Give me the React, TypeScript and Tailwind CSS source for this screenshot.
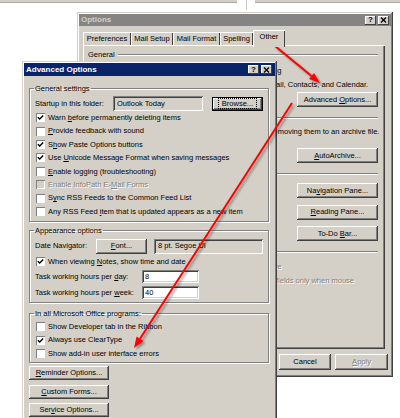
import React from 'react';

const raised = 'shadow-[inset_-1px_-1px_#404040,inset_1px_1px_#ffffff,inset_-2px_-2px_#808080]';
const frame = 'shadow-[inset_-1px_-1px_#404040,inset_1px_1px_#d4d0c8,inset_-2px_-2px_#808080,inset_2px_2px_#ffffff]';
const sunken = 'shadow-[inset_1px_1px_#808080,inset_-1px_-1px_#ffffff,inset_2px_2px_#404040,inset_-2px_-2px_#d4d0c8]';
const dim = 'text-[#808080] [text-shadow:1px_1px_0_#ffffff]';

type Kids = { children?: React.ReactNode; className?: string };

const Btn = ({ children, className = '', focused = false, disabled = false }: Kids & { focused?: boolean; disabled?: boolean }) => (
  <button
    type="button"
    className={`flex items-center justify-center bg-[#d4d0c8] whitespace-nowrap leading-none ${raised} ${focused ? 'border border-black' : ''} ${disabled ? dim : ''} ${className}`}
  >
    {focused ? (
      <span className="px-[3px] border border-dotted border-black leading-[9px]">{children}</span>
    ) : (
      <span>{children}</span>
    )}
  </button>
);

const Check = ({ checked = false, disabled = false }) => (
  <span
    className={`w-[9px] h-[9px] shrink-0 flex items-center justify-center ${disabled ? 'bg-[#d4d0c8]' : 'bg-white'} shadow-[inset_1px_1px_#808080,inset_-1px_-1px_#ffffff]`}
  >
    {checked && (
      <svg width="7" height="7" viewBox="0 0 7 7">
        <path d="M0.8 3.2 L2.7 5.1 L6.2 1.4" fill="none" stroke="#000" strokeWidth="1.4" />
      </svg>
    )}
  </span>
);

const CheckRow = ({ checked = false, disabled = false, children, className = '' }: Kids & { checked?: boolean; disabled?: boolean }) => (
  <div className={`flex items-center gap-[3px] h-[13.4px] ${disabled ? dim : ''} ${className}`}>
    <Check checked={checked} disabled={disabled} />
    <span className="whitespace-nowrap">{children}</span>
  </div>
);

const Group = ({ title, children, className = '' }: Kids & { title: string }) => (
  <fieldset className={`w-[240px] border border-[#808080] shadow-[inset_1px_1px_#ffffff,1px_1px_#ffffff] pl-[5px] ${className}`}>
    <legend className="px-[1px] -ml-[1px] leading-[9px]">{title}</legend>
    {children}
  </fieldset>
);

const TitleBtn = ({ children, className = '' }: Kids) => (
  <span className={`w-[11px] h-[9px] flex items-center justify-center bg-[#d4d0c8] text-black shadow-[inset_-1px_-1px_#404040,inset_1px_1px_#ffffff] ${className}`}>
    {children}
  </span>
);

const TitleBar = ({ title, active = false }: { title: string; active?: boolean }) => (
  <div className={`flex items-center shrink-0 pl-[2px] ${active ? 'h-[13px] pr-[3px] bg-[#0a246a] text-white' : 'h-[12px] pr-[2px] bg-[#848484] text-[#d4d0c8]'}`}>
    <span className="flex-1 font-bold text-[8px] leading-none">{title}</span>
    <TitleBtn>
      <span className="font-bold text-[8px] leading-none">?</span>
    </TitleBtn>
    <TitleBtn className="ml-[2px]">
      <svg width="7" height="6" viewBox="0 0 7 6">
        <path d="M1 0.5 L6 5.5 M6 0.5 L1 5.5" stroke="#000" strokeWidth="1.3" />
      </svg>
    </TitleBtn>
  </div>
);

const Heading = ({ children, className = '' }: Kids) => (
  <div className={`flex items-center h-[9px] ${className}`}>
    <span className="pr-[3px] whitespace-nowrap">{children}</span>
    <div className="flex-1 border-t border-[#808080] border-b border-b-white" />
  </div>
);

const tabs = [
  { label: 'Preferences', w: 'w-[48px]' },
  { label: 'Mail Setup', w: 'w-[42px]' },
  { label: 'Mail Format', w: 'w-[47px]' },
  { label: 'Spelling', w: 'w-[33px]' },
];

const OptionsDialog = () => (
  <div className={`absolute left-[77px] top-[12px] w-[316px] h-[365px] p-[2px] bg-[#d4d0c8] flex flex-col ${frame}`}>
    <TitleBar title="Options" />

    <div className="relative z-10 mt-[4px] ml-[4px] h-[15px] flex items-end">
      {tabs.map((t) => (
        <div key={t.label} className={`${t.w} h-[13px] flex items-center justify-center whitespace-nowrap shadow-[inset_1px_1px_#ffffff,inset_-1px_0_#404040]`}>
          {t.label}
        </div>
      ))}
      <div className="w-[32px] h-[17px] -mb-[2px] pb-[3px] flex items-center justify-center bg-[#d4d0c8] shadow-[inset_1px_1px_#ffffff,inset_-1px_0_#404040]">
        Other
      </div>
    </div>

    <div className="ml-[4px] w-[302px] h-[304px] p-[2px] pl-[5px] pr-[7px] flex flex-col shadow-[inset_1px_1px_#ffffff,inset_-1px_-1px_#404040,inset_-2px_-2px_#808080]">
      <Heading className="mt-[3.5px]">General</Heading>
      <div className="pl-[36px] mt-[4.8px]">
        <CheckRow>Empty the Deleted Items folder upon exiting</CheckRow>
        <CheckRow>Make Outlook the default program for E-mail, Contacts, and Calendar.</CheckRow>
        <div className="flex justify-end mt-[1px]">
          <Btn className="w-[81px] h-[15px]">
            Advanced <u>O</u>ptions...
          </Btn>
        </div>
      </div>

      <Heading className="mt-[6.5px]">AutoArchive</Heading>
      <div className="pl-[38px]">
        <div className="mt-[3px] h-[13px] flex items-center whitespace-nowrap">
          Manage mailbox size by deleting old items or moving them to an archive file.
        </div>
        <div className="flex justify-end mt-[9.5px]">
          <Btn className="w-[81px] h-[15px]">
            <u>A</u>utoArchive...
          </Btn>
        </div>
      </div>

      <Heading className="mt-[6.5px]">Outlook Panes</Heading>
      <div className="flex pl-[38px]">
        <div className="flex-1 mt-[6px]">Customize options for the Outlook panes.</div>
        <div className="flex flex-col gap-[6.5px] mt-[4.5px]">
          <Btn className="w-[81px] h-[15px]">
            Na<u>v</u>igation Pane...
          </Btn>
          <Btn className="w-[81px] h-[15px]">
            <u>R</u>eading Pane...
          </Btn>
          <Btn className="w-[81px] h-[15px]">
            To-Do <u>B</u>ar...
          </Btn>
        </div>
      </div>

      <Heading className="mt-[6.5px]">Person Names</Heading>
      <div className="pl-[36px] mt-[3.8px]">
        <CheckRow disabled>Display online status next to a person name</CheckRow>
        <div className={`flex items-start gap-[3px] pl-[13px] leading-[13.4px] ${dim}`}>
          <span className="mt-[2.2px]">
            <Check disabled />
          </span>
          <span className="whitespace-nowrap">
            Display online status in the To and Cc fields only when mouse
            <br />
            pauses over a person's picture
          </span>
        </div>
      </div>
    </div>

    <div className="flex justify-end gap-[4px] mt-[5px] pr-[3px]">
      <Btn className="w-[52px] h-[16px]">OK</Btn>
      <Btn className="w-[52px] h-[16px]">Cancel</Btn>
      <Btn disabled className="w-[53px] h-[16px]">
        <u>A</u>pply
      </Btn>
    </div>
  </div>
);

const AdvancedDialog = () => (
  <div className={`absolute left-[22px] top-[61px] w-[255px] h-[372px] p-[2px] bg-[#d4d0c8] flex flex-col ${frame}`}>
    <TitleBar title="Advanced Options" active />
    <div className="px-[5px] flex flex-col">
      <Group title="General settings" className="mt-[8px] pt-[3px] pb-[3px]">
        <div className="flex items-center h-[15px]">
          <span className="w-[78px] whitespace-nowrap">Startup in this folder:</span>
          <div className={`w-[90px] h-[15px] flex items-center px-[4px] ${sunken}`}>Outlook Today</div>
          <Btn focused className="ml-[9px] w-[51px] h-[14px]">
            Browse...
          </Btn>
        </div>
        <div className="pl-[1px]">
          <CheckRow checked>
            Warn <u>b</u>efore permanently deleting items
          </CheckRow>
          <CheckRow>
            <u>P</u>rovide feedback with sound
          </CheckRow>
          <CheckRow checked>
            S<u>h</u>ow Paste Options buttons
          </CheckRow>
          <CheckRow checked>
            Use <u>U</u>nicode Message Format when saving messages
          </CheckRow>
          <CheckRow>
            <u>E</u>nable logging (troubleshooting)
          </CheckRow>
          <CheckRow disabled>
            Enable InfoPath E-<u>M</u>ail Forms
          </CheckRow>
          <CheckRow>
            S<u>y</u>nc RSS Feeds to the Common Feed List
          </CheckRow>
          <CheckRow>
            Any RSS Feed <u>i</u>tem that is updated appears as a new item
          </CheckRow>
        </div>
      </Group>

      <Group title="Appearance options" className="mt-[4px] pt-[2px] pb-[1.6px]">
        <div className="flex items-center h-[18px]">
          <span className="w-[61px] whitespace-nowrap">Date Navigator:</span>
          <Btn className="w-[51px] h-[15px]">
            <u>F</u>ont...
          </Btn>
          <div className={`ml-[7px] w-[109px] h-[15px] flex items-center px-[4px] ${sunken}`}>8 pt. Segoe UI</div>
        </div>
        <CheckRow checked className="pl-[1px]">
          When viewing <u>N</u>otes, show time and date
        </CheckRow>
        <div className="flex items-center h-[16px]">
          <span className="w-[107px] whitespace-nowrap">
            Task working hours per <u>d</u>ay:
          </span>
          <div className={`w-[57px] h-[13px] flex items-center px-[3px] bg-white ${sunken}`}>8</div>
        </div>
        <div className="flex items-center h-[16px]">
          <span className="w-[107px] whitespace-nowrap">
            Task working hours per <u>w</u>eek:
          </span>
          <div className={`w-[57px] h-[13px] flex items-center px-[3px] bg-white ${sunken}`}>40</div>
        </div>
      </Group>

      <Group title="In all Microsoft Office programs:" className="mt-[6px] pt-[2px] pb-[1.8px]">
        <div className="pl-[1px]">
          <CheckRow>Show Developer tab in the Ribbon</CheckRow>
          <CheckRow checked>Always use ClearType</CheckRow>
          <CheckRow>Show add-in user interface errors</CheckRow>
        </div>
      </Group>

      <div className="flex flex-col gap-[4.5px] mt-[3px]">
        <Btn className="w-[80px] h-[14px]">
          <u>R</u>eminder Options...
        </Btn>
        <Btn className="w-[80px] h-[14px]">
          <u>C</u>ustom Forms...
        </Btn>
        <Btn className="w-[80px] h-[14px]">
          Ser<u>v</u>ice Options...
        </Btn>
      </div>
    </div>
  </div>
);

const Arrows = () => (
  <svg className="absolute left-0 top-0 pointer-events-none" width="400" height="418" viewBox="0 0 400 418">
    <defs>
      <filter id="soft" x="-10%" y="-10%" width="120%" height="120%">
        <feGaussianBlur stdDeviation="1" />
      </filter>
    </defs>
    <g transform="translate(2 2)" opacity="0.35" filter="url(#soft)">
      <line x1="275" y1="46" x2="311.5" y2="76" stroke="#000" strokeWidth="2" />
      <polygon points="320,83 309,79.1 314,72.9" fill="#000" />
      <line x1="292" y1="103" x2="140" y2="338.8" stroke="#000" strokeWidth="2" />
      <polygon points="134,348 136.6,336.6 143.4,341" fill="#000" />
    </g>
    <line x1="275" y1="46" x2="311.5" y2="76" stroke="#ff0000" strokeWidth="2" />
    <polygon points="320,83 309,79.1 314,72.9" fill="#ff0000" />
    <line x1="292" y1="103" x2="140" y2="338.8" stroke="#ff0000" strokeWidth="2" />
    <polygon points="134,348 136.6,336.6 143.4,341" fill="#ff0000" />
  </svg>
);

const App: React.FC = () => {
  return (
    <div className="relative w-[400px] h-[418px] overflow-hidden bg-white text-black text-[7.5px] leading-none font-['Liberation_Sans',Arial,sans-serif]">
      {/* bits of the windows above */}
      <div className="flex h-[10px]">
        <div className="w-[237px] h-[3px] bg-[#d4d0c8] border-b border-[#a8a8a8]" />
        <div className="ml-[9px] w-px h-[10px] bg-[#c8c8c8]" />
        <div className="ml-[8px] flex-1 h-[3px] bg-[#d4d0c8] border-b border-[#a8a8a8]" />
      </div>

      <OptionsDialog />
      <AdvancedDialog />
      <Arrows />
    </div>
  );
};

export default App;
